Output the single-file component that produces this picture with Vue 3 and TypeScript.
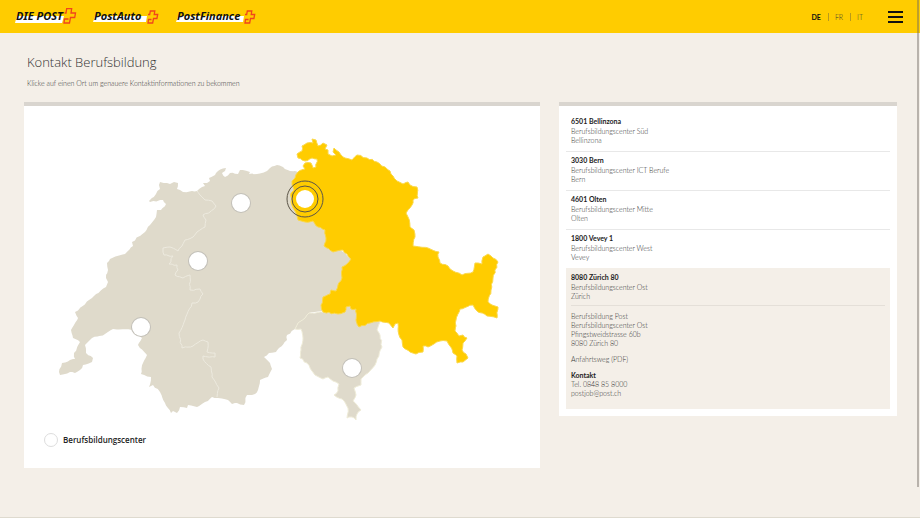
<script setup lang="ts">
import { ref } from 'vue'

type Point = [number, number]

interface Brand {
  name: string
  width: number
  wedge: string
  cross: string
}

interface Place {
  id: string
  title: string
  center: string
  city: string
  x: number
  y: number
  street?: string
}

const brands: Brand[] = [
  {
    name: 'DIE POST',
    width: 62,
    wedge: '1,11 2,8 49,8 47,15 0,15',
    cross: 'M49.5 5H51l.7-4.5h5L56 5h4.500l-.8 4.500H55.500l-1 5.500H49l.5-4h4',
  },
  {
    name: 'PostAuto',
    width: 67,
    wedge: '1,11 2,8 54,8 53,14 0,14',
    cross: 'M55 6.500h1.700l.6-3.500h4.500l-.6 3.500h3.500l-.8 4H60.500l-.8 4.500H55l.5-3.500h3',
  },
  {
    name: 'PostFinance',
    width: 81,
    wedge: '1,11 2,8 68,8 67,14 0,14',
    cross: 'M69 6.500h1.700l.6-3.500h4.500l-.6 3.500h3.500l-.8 4H74.500l-.8 4.500H69l.5-3.500h3',
  },
]

const languages = ['DE', 'FR', 'IT']

const places: Place[] = [
  { id: 'bellinzona', title: '6501 Bellinzona', center: 'Berufsbildungscenter Süd', city: 'Bellinzona', x: 352, y: 368 },
  { id: 'bern', title: '3030 Bern', center: 'Berufsbildungscenter ICT Berufe', city: 'Bern', x: 198, y: 261 },
  { id: 'olten', title: '4601 Olten', center: 'Berufsbildungscenter Mitte', city: 'Olten', x: 241, y: 203 },
  { id: 'vevey', title: '1800 Vevey 1', center: 'Berufsbildungscenter West', city: 'Vevey', x: 141, y: 327 },
  { id: 'zurich', title: '8080 Zürich 80', center: 'Berufsbildungscenter Ost', city: 'Zürich', x: 305, y: 199, street: 'Pfingstweidstrasse 60b' },
]

const selected = ref('zurich')

const westCoords =
  '149,201 156,194 160,189 159,185 160,182 167,183 170,184 174,182 178,183 177,189 180,190 183,192 192,191 197,191 202,187 205,186 203,183 207,183 210,181 209,178 215,175 218,171 226,168 225,171 222,173 225,177 230,173 238,174 240,170 250,172 249,174 257,174 267,171 270,168 277,165 283,167 290,171 298,172 310,180 320,225 340,250 352,259 352,266 345,270 343,284 330,310 309,313 305,318 298,323 295,329 287,335 287,340 279,348 276,352 269,353 264,357 270,363 272,369 268,377 260,380 258,390 255,394 247,395 244,405 237,403 232,404 228,400 218,398 212,397 205,402 197,407 188,405 187,408 180,407 177,413 173,411 171,413 165,403 160,392 153,385 149,387 151,377 141,374 143,363 147,355 138,345 142,338 132,330 113,329 105,334 92,338 85,345 86,353 93,358 92,362 83,365 80,370 75,373 70,372 60,375 59,372 62,363 70,360 75,359 74,353 80,342 73,338 71,330 74,325 78,318 75,312 92,298 106,287 108,282 106,278 108,270 107,263 110,259 125,254 133,246 132,242 145,232 150,225 156,217 157,210 161,210 166,204 163,200 150,202'

const southCoords =
  '309,313 305,318 298,323 295,329 301,329 303,338 301,350 300,358 307,363 315,375 323,379 328,377 333,381 339,384 338,391 334,395 342,399 348,408 347,418 352,417 356,420 357,414 361,410 357,405 353,401 356,395 354,388 361,385 361,379 368,373 375,365 377,359 382,347 380,335 377,330 380,322 370,318 355,305 345,305 338,313 323,312'

const eastCoords =
  '298,172 295,178 292,181 292,185 294,190 291,193 291,202 293,208 297,216 298,220 305,222 313,221 318,227 325,230 326,238 324,246 333,252 343,250 347,254 351,259 348,263 342,267 342,278 338,285 336,291 331,290 330,294 323,297 321,305 323,312 338,314 345,312 346,307 350,306 351,309 356,309 356,320 359,327 370,323 380,321 389,323 393,328 395,324 398,323 399,335 402,340 403,347 410,352 416,354 423,352 423,346 428,347 440,341 447,341 450,346 453,353 457,356 457,363 463,362 468,358 466,354 462,350 463,343 467,338 463,335 459,336 455,331 456,320 460,309 473,305 477,311 487,316 497,318 498,307 492,305 488,302 491,290 493,278 498,262 493,258 488,254 483,257 482,264 475,263 473,272 462,275 453,271 448,266 440,263 438,257 439,252 428,248 413,246 415,237 414,230 410,227 408,217 406,213 412,205 413,200 418,198 417,187 410,185 408,182 403,184 397,181 391,174 390,171 377,162 367,158 357,155 352,160 345,158 341,155 339,152 334,148 333,152 336,155 332,156 328,154 328,150 325,149 327,145 323,143 318,146 316,140 312,139 313,143 307,143 302,146 302,151 297,154 298,158 305,161 312,158 317,159 316,167 313,168 311,163 305,163 303,166 305,169'

const innerCoords =
  '197,191 200,195 205,200 212,201 216,206 210,212 203,215 206,220 205,227 197,232 193,237 185,240 178,251 170,247 163,248 164,255 173,256 169,264 177,265 178,270 175,275 183,278 190,275 190,290 200,289 203,294 198,302 192,303 185,320 179,333 182,348 193,346 203,340 208,342 207,352 215,353 215,357 203,356 203,359 211,367 212,377 219,388 217,397'

// Adds a small, repeatable notch between two vertices so that borders look surveyed.
function roughen(coords: string, close: boolean): string {
  const points = coords.split(' ').map((pair) => pair.split(',').map(Number) as Point)
  const out: string[] = []
  points.forEach((point, index) => {
    out.push(point.join(' '))
    const next = index + 1 < points.length ? points[index + 1] : close ? points[0] : null
    if (!next) return
    const length = Math.hypot(next[0] - point[0], next[1] - point[1])
    if (length < 5) return
    const parts = Math.round(length / 3)
    for (let step = 1; step < parts; step++) {
      const x = point[0] + ((next[0] - point[0]) * step) / parts
      const y = point[1] + ((next[1] - point[1]) * step) / parts
      const wave = Math.sin(x * 12.9 + y * 78.2) * 0.6
      const drift = Math.cos(x * 39.3 + y * 11.1) * 0.6
      out.push(`${(x + wave).toFixed(1)} ${(y + drift).toFixed(1)}`)
    }
  })
  return `M${out.join('L')}${close ? 'Z' : ''}`
}

const west = roughen(westCoords, true)
const south = roughen(southCoords, true)
const east = roughen(eastCoords, true)
const inner = roughen(innerCoords, false)
</script>

<template>
  <div class="page">
    <header class="topbar">
      <nav class="brands">
        <a v-for="brand in brands" :key="brand.name" href="#" class="brand">
          <svg :width="brand.width" height="18" :viewBox="`0 0 ${brand.width} 18`">
            <polygon :points="brand.wedge" fill="#fff" />
            <text x="1" y="12" class="brand-name">{{ brand.name }}</text>
            <path :d="brand.cross" class="brand-cross" />
          </svg>
        </a>
      </nav>
      <nav class="languages">
        <a v-for="(language, index) in languages" :key="language" href="#" :class="['language', { current: index === 0 }]">{{ language }}</a>
      </nav>
      <button class="menu" type="button" aria-label="Menu">
        <span></span><span></span><span></span>
      </button>
    </header>

    <main class="content">
      <h1>Kontakt Berufsbildung</h1>
      <p class="intro">Klicke auf einen Ort um genauere Kontaktinformationen zu bekommen</p>

      <div class="columns">
        <section class="card map-card">
          <svg class="map" viewBox="24 130 516 296">
            <path :d="west" class="region" />
            <path :d="south" class="region outlined" />
            <path :d="inner" class="border" />
            <path :d="east" class="region active" />
            <g v-for="place in places" :key="place.id" class="marker" @click="selected = place.id">
              <circle v-if="place.id !== selected" :cx="place.x" :cy="place.y" r="10" class="marker-shade" />
              <circle :cx="place.x" :cy="place.y" r="9" class="marker-dot" />
              <template v-if="place.id === selected">
                <circle :cx="place.x" :cy="place.y" r="13" class="ring" />
                <circle :cx="place.x" :cy="place.y" r="18" class="ring" />
              </template>
            </g>
          </svg>
          <div class="legend"><span class="legend-dot"></span>Berufsbildungscenter</div>
        </section>

        <section class="card list-card">
          <ul class="places">
            <li v-for="place in places" :key="place.id" :class="['place', { open: place.id === selected }]">
              <button type="button" class="place-head" @click="selected = place.id">
                <strong>{{ place.title }}</strong>
                <span>{{ place.center }}</span>
                <span>{{ place.city }}</span>
              </button>
              <div v-if="place.id === selected" class="details">
                <p>
                  Berufsbildung Post<br />{{ place.center }}<br />
                  <template v-if="place.street">{{ place.street }}<br /></template>{{ place.title }}
                </p>
                <p><a href="#">Anfahrtsweg (PDF)</a></p>
                <p><strong>Kontakt</strong><br />Tel. 0848 85 8000<br /><a href="mailto:postjob@post.ch">postjob@post.ch</a></p>
              </div>
            </li>
          </ul>
        </section>
      </div>
    </main>
    <div class="scroll-thumb"></div>
  </div>
</template>

<style>
body {
  background: #f4efe8;
}
</style>

<style scoped>
.page {
  position: relative;
  box-sizing: border-box;
  min-height: 100vh;
  border-bottom: 1px solid #dedacf;
  font-family: Lato, 'Noto Sans', sans-serif;
  font-weight: 300;
  color: #333;
}

a {
  color: inherit;
  text-decoration: none;
}

.topbar {
  display: flex;
  align-items: center;
  height: 33px;
  padding: 0 17px 0 15px;
  background: #fc0;
}

.brands {
  display: flex;
  flex: 1;
  gap: 16px;
}

.brand svg {
  display: block;
}

.brand-name {
  font-family: 'Noto Sans', 'Open Sans', sans-serif;
  font-size: 11px;
  font-style: italic;
  font-weight: 700;
  fill: #111;
}

.brand-cross {
  fill: none;
  stroke: #f0441c;
  stroke-width: 1.3;
}

.languages {
  display: flex;
  margin-right: 25px;
  font-size: 7px;
  line-height: 8px;
}

.language + .language {
  margin-left: 7px;
  padding-left: 6px;
  border-left: 1px solid #b99a1b;
}

.language.current {
  font-weight: 700;
  color: #111;
}

.menu {
  display: flex;
  flex-direction: column;
  gap: 3px;
  width: 15px;
  padding: 0;
  border: 0;
  background: none;
}

.menu span {
  height: 2px;
  background: #111;
}

.content {
  padding: 19px 23px 24px 24px;
}

h1 {
  margin: 0 3px;
  font-family: 'Open Sans', 'Noto Sans', sans-serif;
  font-size: 13px;
  font-weight: 300;
  line-height: 20px;
}

.intro {
  margin: 7px 3px 14px;
  font-size: 7px;
  line-height: 9px;
}

.columns {
  display: grid;
  grid-template-columns: 516fr 338fr;
  align-items: start;
  gap: 19px;
}

.card {
  border-top: 4px solid #d9d5cf;
  background: #fff;
}

.map-card {
  padding: 24px 0 20px;
}

.map {
  display: block;
  width: 100%;
}

.region {
  fill: #dfdacb;
}

.outlined,
.active {
  stroke: #efecd8;
  stroke-width: 1;
}

.active {
  fill: #fc0;
  stroke: #fbd84a;
}

.border {
  fill: none;
  stroke: #edeadf;
  stroke-width: 1;
}

.marker {
  cursor: pointer;
}

.marker-shade {
  fill: #c3c0b9;
}

.marker-dot {
  fill: #fff;
}

.ring {
  fill: none;
  stroke: #5b5548;
  stroke-width: 1;
}

.legend {
  display: flex;
  align-items: center;
  gap: 5px;
  margin-top: 6px;
  padding-left: 20px;
  font-family: 'Open Sans', 'Noto Sans', sans-serif;
  font-size: 8px;
  font-weight: 600;
  line-height: 16px;
  color: #222;
}

.legend-dot {
  box-sizing: border-box;
  width: 14px;
  height: 14px;
  border: 1px solid #ddd;
  border-radius: 50%;
}

.list-card {
  padding: 7px;
}

.places {
  margin: 0;
  padding: 0;
  list-style: none;
}

.place {
  padding: 2px 5px 4px;
  border-bottom: 1px solid #e8e8e8;
  font-size: 7px;
  line-height: 9px;
}

.place:nth-last-child(2) {
  border-bottom-color: #f4efe8;
}

.place-head {
  display: flex;
  flex-direction: column;
  width: 100%;
  padding: 0 0 2px;
  border: 0;
  background: none;
  font: inherit;
  color: inherit;
  text-align: left;
  cursor: pointer;
}

strong {
  font-weight: 700;
  color: #222;
}

.place-head strong {
  line-height: 12px;
}

.open {
  padding-bottom: 11px;
  border-bottom: 0;
  background: #f4efe8;
}

.open .place-head {
  padding-bottom: 4px;
}

.details {
  padding-top: 6px;
  border-top: 1px solid #e4dfd8;
}

.details p {
  margin: 0 0 7px;
}

.details p:last-child {
  margin-bottom: 0;
}

.scroll-thumb {
  position: absolute;
  top: 0;
  right: 1px;
  width: 2px;
  height: 94vh;
  background: rgb(110 105 98 / 45%);
}
</style>
